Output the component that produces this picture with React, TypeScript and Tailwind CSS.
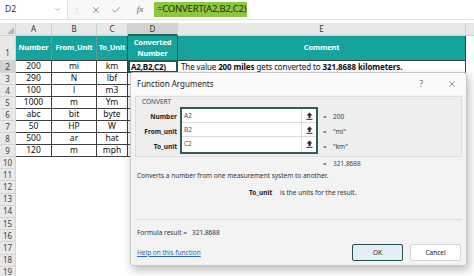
import { X, Check, ChevronDown } from 'lucide-react';

const rows = [
  ['200', 'mi', 'km'],
  ['290', 'N', 'lbf'],
  ['100', 'l', 'm3'],
  ['1000', 'm', 'Ym'],
  ['abc', 'bit', 'byte'],
  ['50', 'HP', 'W'],
  ['500', 'ar', 'hat'],
  ['120', 'm', 'mph'],
];

const emptyRows = [10, 11, 12, 13, 14, 15, 16, 17, 18, 19];

// little "collapse dialog" arrow used on the argument boxes
function RefIcon() {
  return (
    <svg width="7" height="8" viewBox="0 0 7 8" className="text-[#222]">
      <path d="M3.5 0.5 L6.5 3.5 H4.5 V6 H2.5 V3.5 H0.5 Z" fill="currentColor" />
      <rect x="0.5" y="6.8" width="6" height="1" fill="currentColor" />
    </svg>
  );
}

function RowNum({ n, active, tall }: { n: number; active?: boolean; tall?: boolean }) {
  return (
    <div
      className={`w-[16px] shrink-0 flex justify-center border-r border-b border-[#d4d4d4] text-[8px] text-[#444] ${
        tall ? 'items-end pb-[1px]' : 'items-center'
      } ${active ? 'bg-[#d2d2d2] text-[#1e1e1e]' : 'bg-[#e8e8e8]'}`}
    >
      {n}
    </div>
  );
}

function ArgRow({ value, last }: { value: string; last?: boolean }) {
  return (
    <div className={`h-[14px] flex bg-white ${last ? '' : 'border-b border-[#d9d9d9]'}`}>
      <div className="flex-1 flex items-center pl-[2px] text-[6.5px] text-[#555]">{value}</div>
      <div className="w-[15px] flex items-center justify-center border-l border-[#e0e0e0]">
        <RefIcon />
      </div>
    </div>
  );
}

export default function App() {
  return (
    <div className="w-[474px] h-[276px] relative overflow-hidden bg-white font-['Noto_Sans',sans-serif]">
      {/* formula bar */}
      <div className="h-[20px] flex items-center bg-[#f7f7f7] border-b border-[#e4e4e4]">
        <div className="w-[68px] h-full flex items-center justify-between pl-[5px] pr-[6px] bg-white border-r border-[#e0e0e0]">
          <span className="text-[8.5px] text-[#333]">D2</span>
          <ChevronDown className="w-[7px] h-[7px] text-[#777]" />
        </div>
        <div className="w-[18px] flex justify-center text-[8px] text-[#bbb] leading-none">⋮</div>
        <div className="w-[20px] flex justify-center">
          <X className="w-[10px] h-[10px] text-[#555]" strokeWidth={1.5} />
        </div>
        <div className="w-[20px] flex justify-center">
          <Check className="w-[10px] h-[10px] text-[#555]" strokeWidth={1.5} />
        </div>
        <div className="w-[28px] flex justify-center font-['Liberation_Serif',serif] italic text-[9px] text-[#555]">
          fx
        </div>
        <div className="flex-1 h-full flex items-center bg-white">
          <div className="h-[15px] w-[93px] flex items-center pl-[3px] bg-[#8dc63f] text-[9.5px] tracking-[-0.2px] text-[#1d2d10]">
            =CONVERT(A2,B2,C2)
          </div>
        </div>
      </div>

      <div className="h-[3px]" />

      {/* column headers */}
      <div className="h-[13px] flex bg-[#e8e8e8] text-[8px] text-[#333]">
        <div className="w-[16px] shrink-0 relative border-r border-b border-[#cfcfcf]">
          <div className="absolute right-[1px] bottom-[1px] w-0 h-0 border-l-[7px] border-l-transparent border-b-[7px] border-b-[#b5b5b5]" />
        </div>
        <div className="w-[36px] flex items-center justify-center border-r border-b border-[#cfcfcf]">A</div>
        <div className="w-[45px] flex items-center justify-center border-r border-b border-[#cfcfcf]">B</div>
        <div className="w-[31px] flex items-center justify-center border-r border-b border-[#cfcfcf]">C</div>
        <div className="w-[50px] flex items-center justify-center border-r border-[#cfcfcf] border-b-2 border-b-[#1e6b4e] bg-[#d2d2d2]">
          D
        </div>
        <div className="w-[288px] flex items-center justify-center border-r border-b border-[#cfcfcf]">E</div>
        <div className="flex-1 border-b border-[#cfcfcf]" />
      </div>

      {/* row 1 : table header */}
      <div className="h-[25px] flex">
        <RowNum n={1} tall />
        <div className="flex bg-[#17a39d] text-white font-bold text-[7.5px] tracking-[-0.15px] border-b border-[#3f3f3f]">
          <div className="w-[36px] flex items-center justify-center border-r border-[#5b9e9a]">Number</div>
          <div className="w-[45px] flex items-center justify-center border-r border-[#5b9e9a]">From_Unit</div>
          <div className="w-[31px] flex items-center justify-center border-r border-[#2f4f4d]">To_Unit</div>
          <div className="w-[50px] flex flex-col items-center justify-center leading-[11px] border-r border-[#2f4f4d]">
            <span>Converted</span>
            <span>Number</span>
          </div>
          <div className="w-[288px] flex items-center justify-center border-r border-[#3f3f3f]">Comment</div>
        </div>
        <div className="flex-1" />
      </div>

      {/* data rows */}
      {rows.map((r, i) => (
        <div key={i} className="h-[12px] flex text-[8.5px] text-[#111]">
          <RowNum n={i + 2} active={i === 0} />
          <div className="w-[36px] flex items-center justify-center border-r border-b border-[#3f3f3f]">{r[0]}</div>
          <div className="w-[45px] flex items-center justify-center border-r border-b border-[#3f3f3f]">{r[1]}</div>
          <div className="w-[31px] flex items-center justify-center border-r border-b border-[#3f3f3f]">{r[2]}</div>
          {i === 0 ? (
            <>
              <div className="w-[50px] flex items-center pl-[1px] font-bold text-[8px] tracking-[-0.2px] overflow-hidden whitespace-nowrap border-2 border-[#1e5a48] -mt-[1px] h-[13px]">
                A2,B2,C2)
              </div>
              <div className="w-[288px] flex items-center pl-[3px] whitespace-nowrap text-[8px] tracking-[-0.1px] border-r border-b border-[#3f3f3f]">
                The value&nbsp;<b>200 miles</b>&nbsp;gets converted to&nbsp;<b>321.8688 kilometers.</b>
              </div>
            </>
          ) : (
            <>
              <div className="w-[50px] border-r border-b border-[#3f3f3f]" />
              <div className="w-[288px] border-r border-b border-[#3f3f3f]" />
            </>
          )}
        </div>
      ))}

      {emptyRows.map((n) => (
        <div key={n} className="h-[12.2px] flex">
          <RowNum n={n} />
        </div>
      ))}

      {/* Function Arguments dialog */}
      <div className="absolute left-[130px] top-[72px] w-[337px] h-[194px] flex flex-col bg-[#f3f3f3] border border-[#c9c9c9] rounded-[3px] shadow-[2px_4px_10px_rgba(0,0,0,0.28)] text-[#333]">
        <div className="h-[22px] shrink-0 flex items-center pl-[6px] pr-[9px] bg-[#fafafa] rounded-t-[3px]">
          <span className="flex-1 text-[8px] text-[#222]">Function Arguments</span>
          <span className="mr-[24px] text-[8px] text-[#666]">?</span>
          <X className="w-[10px] h-[10px] text-[#333]" strokeWidth={1.3} />
        </div>

        <div className="mx-[4px] mt-[1px] h-[61px] shrink-0 bg-[#eeeeee] border border-[#dedede]">
          <div className="h-[10px] flex items-center pl-[6px] text-[6.5px] text-[#444]">CONVERT</div>
          <div className="flex">
            <div className="w-[41px] pt-[2px] flex flex-col items-end text-[6.5px] font-bold text-[#222]">
              <div className="h-[15px] flex items-center">Number</div>
              <div className="h-[15px] flex items-center">From_unit</div>
              <div className="h-[15px] flex items-center">To_unit</div>
            </div>
            <div className="ml-[3px] w-[138px] border-2 border-[#2c5e5b] bg-white">
              <ArgRow value="A2" />
              <ArgRow value="B2" />
              <ArgRow value="C2" last />
            </div>
            <div className="pl-[5px] pt-[2px] flex flex-col text-[6.5px] text-[#444]">
              <div className="h-[15px] flex items-center"><span className="w-[10px]">=</span>200</div>
              <div className="h-[15px] flex items-center"><span className="w-[10px]">=</span>"mi"</div>
              <div className="h-[15px] flex items-center"><span className="w-[10px]">=</span>"km"</div>
            </div>
          </div>
        </div>

        <div className="h-[13px] shrink-0 flex items-center pl-[192px] text-[6.5px] text-[#444]">
          <span className="w-[10px]">=</span>321.8688
        </div>
        <div className="h-[11px] shrink-0 flex items-center pl-[6px] text-[6.5px] text-[#333]">
          Converts a number from one measurement system to another.
        </div>
        <div className="mt-[6px] h-[11px] shrink-0 flex items-center pl-[118px] text-[6.5px] text-[#333]">
          <span className="w-[31px] font-bold text-[#222]">To_unit</span>
          is the units for the result.
        </div>

        <div className="mt-[21px] mx-[4px] shrink-0 border-t border-[#dcdcdc]" />

        <div className="mt-[7px] h-[12px] shrink-0 flex items-center pl-[6px] text-[6.5px] text-[#333]">
          <span className="w-[55px]">Formula result =</span>
          321.8688
        </div>

        <div className="mt-[5px] h-[17px] shrink-0 flex items-center pl-[6px] pr-[5px]">
          <span className="flex-1 text-[6.5px] text-[#2b64c0] underline">Help on this function</span>
          <button className="w-[51px] h-[17px] bg-[#e3eef9] border-[1.5px] border-[#244f4d] rounded-[2px] text-[6.5px] text-[#222]">
            OK
          </button>
          <button className="ml-[7px] w-[51px] h-[17px] bg-white border border-[#d4d4d4] rounded-[2px] text-[6.5px] text-[#222]">
            Cancel
          </button>
        </div>
      </div>
    </div>
  );
}
